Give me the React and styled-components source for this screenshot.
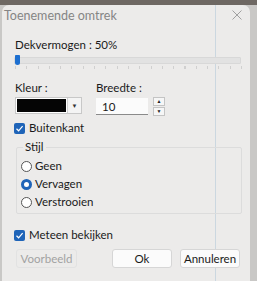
import styled, { createGlobalStyle } from 'styled-components';

const GlobalStyle = createGlobalStyle`
  html, body {
    margin: 0;
    padding: 0;
    height: 281px;
    overflow: hidden;
  }
  body {
    background: linear-gradient(#6e6863 0 5px, #c9c8c6 5px);
    font-family: Lato, "Noto Sans", sans-serif;
    font-size: 11.5px;
    color: #1a1a1a;
  }
`;

const Window = styled.div`
  margin: 5px 0 0 2px;
  width: 248px;
  height: 276px;
  box-sizing: border-box;
  border-radius: 7px 7px 0 0;
  background:
    linear-gradient(90deg, transparent 213px, #cbd7e0 213px, #cbd7e0 214px, transparent 214px),
    #ecebea;
  display: flex;
  flex-direction: column;
`;

const TitleBar = styled.div`
  height: 20px;
  display: flex;
  align-items: center;
  justify-content: space-between;
  padding: 0 8px 0 2px;
  color: #858585;
  font-size: 12.5px;
`;

const Close = styled.svg`
  width: 10px;
  height: 10px;
  stroke: #a0a0a0;
  stroke-width: 1;
`;

const Body = styled.div`
  padding: 13px 9px 0 13px;
  display: flex;
  flex-direction: column;
`;

const Label = styled.div`
  line-height: 14px;
`;

const Slider = styled.div`
  position: relative;
  margin: 3px 0 0 -1px;
  height: 10px;
  width: 227px;
  display: flex;
  align-items: center;
`;

const Track = styled.div`
  flex: 1;
  height: 5px;
  background: #e2e2e2;
  border: 1px solid #d8d8d8;
  border-radius: 1px;
`;

const Thumb = styled.div`
  position: absolute;
  left: 1px;
  top: 0;
  width: 5px;
  height: 10px;
  background: #1d6fd0;
  border-radius: 1px 1px 3px 3px;
`;

const Ticks = styled.div`
  margin: 1px 0 0 0;
  width: 227px;
  height: 3px;
  background: repeating-linear-gradient(90deg, #c4c4c4 0 1px, transparent 1px 11.3px);
  opacity: 0.7;
`;

const FieldRow = styled.div`
  display: flex;
  gap: 14px;
  margin-top: 12px;
`;

const Field = styled.div`
  display: flex;
  flex-direction: column;
  gap: 2px;
`;

const Picker = styled.div`
  display: flex;
  width: 67px;
  height: 17px;
  box-sizing: border-box;
  border: 1px solid #c8c8c8;
  background: #fff;
`;

const Swatch = styled.div`
  flex: 1;
  background: #050505;
  border: 1px solid #fff;
`;

const DropBtn = styled.div`
  width: 13px;
  display: flex;
  align-items: center;
  justify-content: center;
  background: #f4f4f4;
  border-left: 1px solid #d0d0d0;
  font-size: 6px;
  color: #333;
`;

const SpinWrap = styled.div`
  display: flex;
  align-items: center;
  gap: 5px;
`;

const Input = styled.div`
  width: 52px;
  height: 17px;
  box-sizing: border-box;
  padding: 0 6px;
  line-height: 17px;
  background: #fbfbfb;
  border-bottom: 1px solid #8a8a8a;
`;

const Spin = styled.div`
  width: 12px;
  display: flex;
  flex-direction: column;
  gap: 1px;
`;

const SpinBtn = styled.div`
  height: 7px;
  background: #f6f6f6;
  border: 1px solid #c4c4c4;
  font-size: 5px;
  line-height: 7px;
  text-align: center;
  color: #222;
`;

const CheckRow = styled.div`
  display: flex;
  align-items: center;
  gap: 4px;
  margin: ${p => p.$top}px 0 0 -1px;
  line-height: 14px;
`;

const Box = styled.div`
  width: 11px;
  height: 11px;
  border-radius: 2px;
  background: #1f64b8;
  display: flex;
  align-items: center;
  justify-content: center;
`;

const Group = styled.fieldset`
  margin: 5px 0 0 1px;
  width: 226px;
  box-sizing: border-box;
  border: 1px solid #dcdcdc;
  border-radius: 2px;
  padding: 5px 6px 4px 4px;
  display: flex;
  flex-direction: column;
  gap: 4px;
`;

const Legend = styled.legend`
  padding: 0 2px;
  margin-left: 2px;
  line-height: 14px;
`;

const RadioRow = styled.div`
  display: flex;
  align-items: center;
  gap: 3px;
  line-height: 14px;
`;

const Radio = styled.div`
  width: 11px;
  height: 11px;
  box-sizing: border-box;
  border-radius: 50%;
  border: ${p => (p.$on ? '3.5px solid #1f64b8' : '1px solid #555')};
  background: #fff;
`;

const Buttons = styled.div`
  display: flex;
  margin: 7px 0 0 1px;
  gap: 8px;
`;

const Button = styled.div`
  width: ${p => p.$w || 60}px;
  height: 19px;
  box-sizing: border-box;
  display: flex;
  align-items: center;
  justify-content: center;
  border-radius: 3px;
  background: ${p => (p.$disabled ? 'transparent' : '#fbfbfb')};
  border: 1px solid ${p => (p.$disabled ? '#e2e2e2' : '#d6d6d6')};
  color: ${p => (p.$disabled ? '#a2a2a2' : '#1a1a1a')};
  margin-left: ${p => p.$gap || 0}px;
`;

const Tick = () => (
  <svg width="9" height="9" viewBox="0 0 9 9">
    <path d="M1.5 4.8 L3.6 6.8 L7.6 2.2" fill="none" stroke="#fff" strokeWidth="1.2" />
  </svg>
);

const App = () => (
  <>
    <GlobalStyle />
    <Window>
      <TitleBar>
        <span>Toenemende omtrek</span>
        <Close viewBox="0 0 10 10">
          <path d="M0.5 0.5 L9.5 9.5 M9.5 0.5 L0.5 9.5" />
        </Close>
      </TitleBar>
      <Body>
        <Label>Dekvermogen : 50%</Label>
        <Slider>
          <Track />
          <Thumb />
        </Slider>
        <Ticks />
        <FieldRow>
          <Field>
            <Label>Kleur :</Label>
            <Picker>
              <Swatch />
              <DropBtn>▼</DropBtn>
            </Picker>
          </Field>
          <Field>
            <Label>Breedte :</Label>
            <SpinWrap>
              <Input>10</Input>
              <Spin>
                <SpinBtn>▲</SpinBtn>
                <SpinBtn>▼</SpinBtn>
              </Spin>
            </SpinWrap>
          </Field>
        </FieldRow>
        <CheckRow $top={5}>
          <Box><Tick /></Box>
          Buitenkant
        </CheckRow>
        <Group>
          <Legend>Stijl</Legend>
          <RadioRow><Radio />Geen</RadioRow>
          <RadioRow><Radio $on />Vervagen</RadioRow>
          <RadioRow><Radio />Verstrooien</RadioRow>
        </Group>
        <CheckRow $top={14}>
          <Box><Tick /></Box>
          Meteen bekijken
        </CheckRow>
        <Buttons>
          <Button $disabled $w={61}>Voorbeeld</Button>
          <Button $gap={27}>Ok</Button>
          <Button>Annuleren</Button>
        </Buttons>
      </Body>
    </Window>
  </>
);

export default App;
